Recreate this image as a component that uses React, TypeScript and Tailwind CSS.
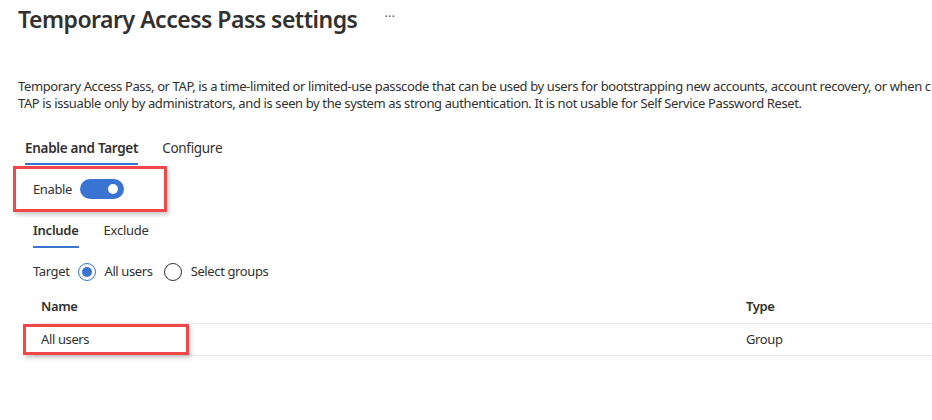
import React from "react";

const font = { fontFamily: '"Noto Sans", "Open Sans", sans-serif' };

function Tab({ label, active }: { label: string; active?: boolean }) {
  return (
    <div className="flex flex-col">
      <span className={active ? "font-semibold text-[#323130]" : "text-[#323130]"}>{label}</span>
      <div className={active ? "mt-[5px] h-[2px] bg-[#3a74d2]" : "mt-[5px] h-[2px]"} />
    </div>
  );
}

function Radio({ checked }: { checked?: boolean }) {
  return (
    <span
      className={
        checked
          ? "shrink-0 w-[18px] h-[18px] rounded-full border border-[#3a74d2] flex items-center justify-center"
          : "shrink-0 w-[18px] h-[18px] rounded-full border border-[#323130] flex"
      }
    >
      {checked && <span className="w-[10px] h-[10px] rounded-full bg-[#3a74d2]" />}
    </span>
  );
}

export default function App() {
  return (
    <div className="w-[932px] h-[420px] bg-white overflow-hidden text-[#323130] text-[13px] tracking-[-0.38px]" style={font}>
      <div className="flex items-center pl-[18px] pt-[2px] h-[36px]">
        <h1 className="text-[23px] font-semibold tracking-[-0.5px]">Temporary Access Pass settings</h1>
        <span className="ml-[27px] text-[13px] tracking-[0px] text-[#605e5c] -mt-[4px]">···</span>
      </div>

      <div className="pl-[18px] mt-[42px] leading-[17px] whitespace-nowrap">
        <p>
          Temporary Access Pass, or TAP, is a time-limited or limited-use passcode that can be used by users for bootstrapping new accounts, account recovery, or when c
        </p>
        <p>TAP is issuable only by administrators, and is seen by the system as strong authentication. It is not usable for Self Service Password Reset.</p>
      </div>

      <div className="ml-[25px] mt-[26px] flex gap-[24px] text-[13.5px] tracking-[-0.3px]">
        <Tab label="Enable and Target" active />
        <Tab label="Configure" />
      </div>

      <div className="ml-[13px] mt-[1px] w-[154px] h-[46px] border-[3px] border-[#f0474b] shadow-[2px_3px_4px_rgba(0,0,0,0.2)] flex items-center pl-[17px] gap-[8px]">
        <span>Enable</span>
        <span className="w-[44px] h-[20px] rounded-full bg-[#3a74d2] flex items-center justify-end pr-[6px]">
          <span className="w-[10px] h-[10px] rounded-full bg-white" />
        </span>
      </div>

      <div className="ml-[33px] mt-[9px] flex gap-[25px] tracking-[-0.25px]">
        <Tab label="Include" active />
        <Tab label="Exclude" />
      </div>

      <div className="ml-[33px] mt-[13px] flex items-center h-[22px]">
        <span>Target</span>
        <span className="ml-[9px] flex"><Radio checked /></span>
        <span className="ml-[8px]">All users</span>
        <span className="ml-[11px] flex"><Radio /></span>
        <span className="ml-[9px]">Select groups</span>
      </div>

      <div className="ml-[33px] mt-[7px]">
        <div className="flex h-[34px] items-center border-b border-[#edebe9] font-semibold">
          <span className="w-[713px] pl-[8px]">Name</span>
          <span>Type</span>
        </div>
        <div className="relative flex h-[32px] items-center border-b border-[#edebe9]">
          <span className="w-[713px] pl-[8px]">All users</span>
          <span>Group</span>
          <div className="absolute left-[-10px] top-[0px] w-[166px] h-[31px] border-[3px] border-[#f0474b] shadow-[2px_3px_4px_rgba(0,0,0,0.2)]" />
        </div>
      </div>
    </div>
  );
}
